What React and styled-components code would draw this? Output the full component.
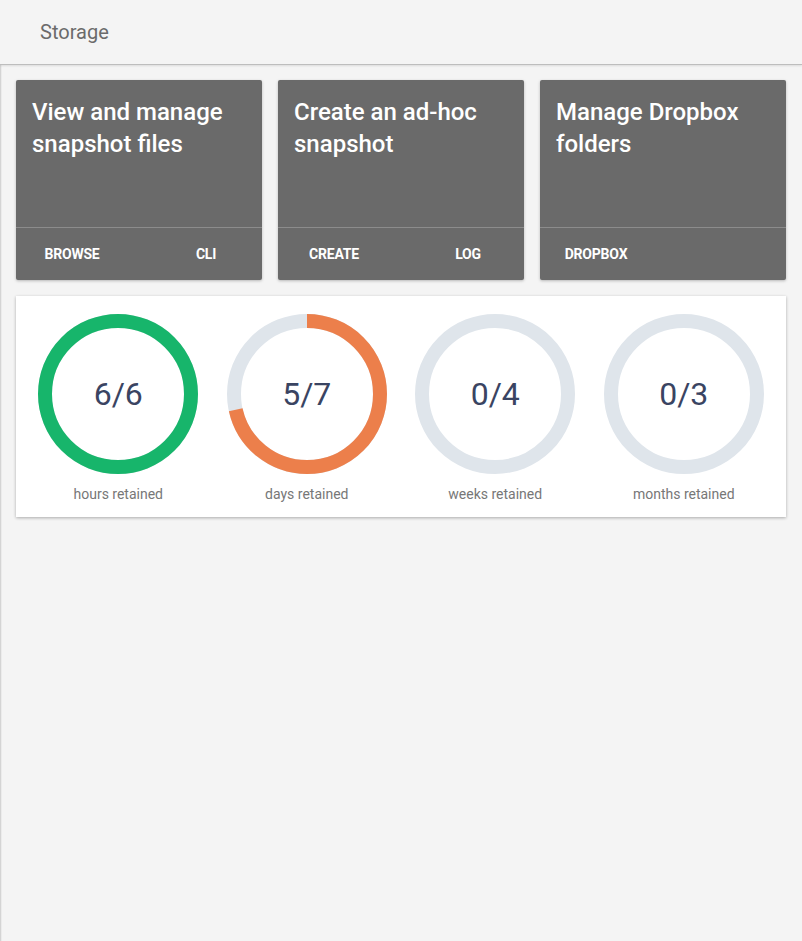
import styled, { createGlobalStyle } from "styled-components";

const GlobalStyle = createGlobalStyle`
    html, body {
        margin: 0;
        padding: 0;
        background: #f4f4f4;
    }
    body {
        font-family: Roboto, "Liberation Sans", sans-serif;
    }
`;

const cards = [
    { title: "View and manage snapshot files", actions: ["BROWSE", "CLI"] },
    { title: "Create an ad-hoc snapshot", actions: ["CREATE", "LOG"] },
    { title: "Manage Dropbox folders", actions: ["DROPBOX"] },
];

const stats = [
    { done: 6, total: 6, label: "hours retained", color: "#17b56b" },
    { done: 5, total: 7, label: "days retained", color: "#ec7f4b" },
    { done: 0, total: 4, label: "weeks retained", color: "#ec7f4b" },
    { done: 0, total: 3, label: "months retained", color: "#ec7f4b" },
];

function Ring({ done, total, color }) {
    const r = 73;
    const c = 2 * Math.PI * r;
    const frac = total ? done / total : 0;
    return (
        <RingBox>
            <svg width="160" height="160" viewBox="0 0 160 160">
                <circle cx="80" cy="80" r={r} fill="none" stroke="#dfe5eb" strokeWidth="14" />
                {frac > 0 && (
                    <circle
                        cx="80"
                        cy="80"
                        r={r}
                        fill="none"
                        stroke={color}
                        strokeWidth="14"
                        strokeDasharray={`${c * frac} ${c}`}
                        transform="rotate(-90 80 80)"
                    />
                )}
            </svg>
            <RingValue>{done}/{total}</RingValue>
        </RingBox>
    );
}

export default function App() {
    return (
        <Page>
            <GlobalStyle />
            <Header>Storage</Header>
            <Content>
                <CardRow>
                    {cards.map((card) => (
                        <Card key={card.title}>
                            <CardTitle>{card.title}</CardTitle>
                            <CardActions>
                                {card.actions.map((a) => (
                                    <ActionButton key={a}>{a}</ActionButton>
                                ))}
                            </CardActions>
                        </Card>
                    ))}
                </CardRow>
                <StatsPanel>
                    {stats.map((s) => (
                        <Stat key={s.label}>
                            <Ring done={s.done} total={s.total} color={s.color} />
                            <StatLabel>{s.label}</StatLabel>
                        </Stat>
                    ))}
                </StatsPanel>
            </Content>
        </Page>
    );
}

const Page = styled.div`
    min-height: 941px;
    background: #f4f4f4;
    box-shadow: inset 1px 0 0 #d4d4d4, inset 2px 0 0 #ebebeb;
    box-sizing: border-box;
`;

const Header = styled.div`
    height: 64px;
    box-sizing: border-box;
    display: flex;
    align-items: center;
    padding-left: 40px;
    font-size: 20px;
    color: #6b6b6b;
    background: #f4f4f4;
    box-shadow: 0 1px 0 #bdbdbd, 0 2px 2px rgba(0, 0, 0, 0.1);
`;

const Content = styled.div`
    padding: 16px;
    display: flex;
    flex-direction: column;
    gap: 16px;
`;

const CardRow = styled.div`
    display: grid;
    grid-template-columns: repeat(3, 1fr);
    gap: 16px;
`;

const Card = styled.div`
    height: 200px;
    background: #6a6a6a;
    border-radius: 2px;
    box-shadow: 0 1px 3px rgba(0, 0, 0, 0.25);
    display: flex;
    flex-direction: column;
    color: #fff;
`;

const CardTitle = styled.div`
    flex: 1;
    padding: 16px 16px 0;
    font-size: 24px;
    font-weight: 500;
    line-height: 32px;
`;

const CardActions = styled.div`
    height: 52px;
    border-top: 1px solid #8c8c8c;
    padding: 0 12px;
    display: flex;
    align-items: center;
    justify-content: space-between;
`;

const ActionButton = styled.div`
    min-width: 88px;
    text-align: center;
    font-size: 14px;
    font-weight: 700;
    color: #fff;
    letter-spacing: -0.2px;
`;

const StatsPanel = styled.div`
    background: #fff;
    box-shadow: 0 1px 3px rgba(0, 0, 0, 0.3);
    display: grid;
    grid-template-columns: repeat(4, 1fr);
    padding: 18px 8px 13px;
`;

const Stat = styled.div`
    display: flex;
    flex-direction: column;
    align-items: center;
`;

const RingBox = styled.div`
    position: relative;
    width: 160px;
    height: 160px;
    svg {
        display: block;
    }
`;

const RingValue = styled.div`
    position: absolute;
    inset: 0;
    display: flex;
    align-items: center;
    justify-content: center;
    font-size: 32px;
    color: #3a4462;
`;

const StatLabel = styled.div`
    margin-top: 10px;
    font-size: 14px;
    line-height: 20px;
    color: #777;
`;
